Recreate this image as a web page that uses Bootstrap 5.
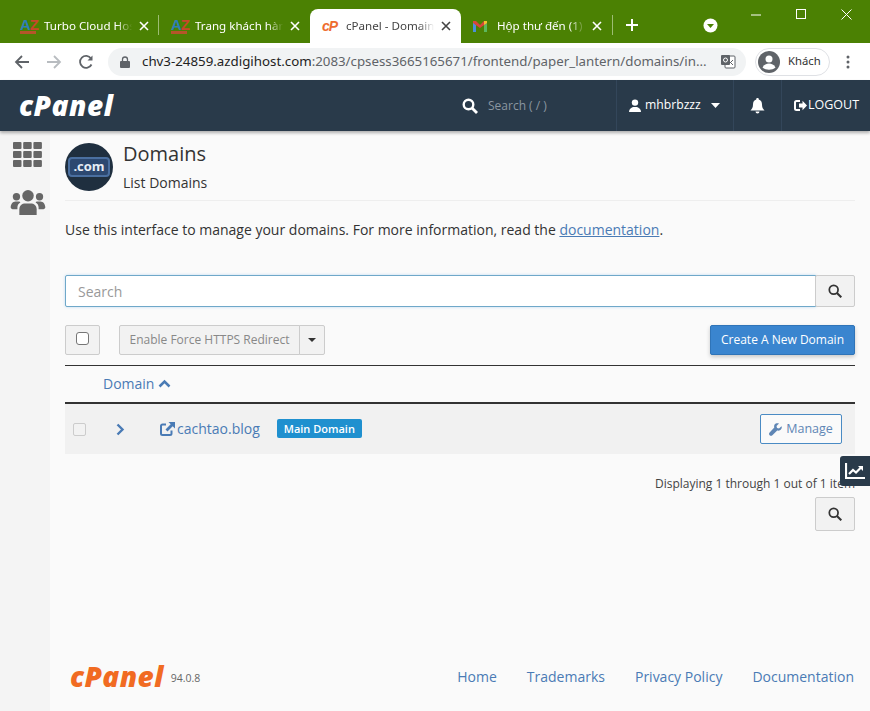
<!DOCTYPE html>
<html lang="en">
<head>
<meta charset="UTF-8">
<meta name="viewport" content="width=device-width, initial-scale=1.0">
<title>cPanel - Domains</title>
<link href="https://cdn.jsdelivr.net/npm/bootstrap@5.3.3/dist/css/bootstrap.min.css" rel="stylesheet">
<script src="https://cdn.jsdelivr.net/npm/bootstrap@5.3.3/dist/js/bootstrap.bundle.min.js"></script>
<style>
    html, body { height: 100%; }
    body { font-family: "Open Sans", "Liberation Sans", sans-serif; font-size: 14px; color: #333; background: #fafafa; overflow: hidden; }
    .page-wrap { height: 711px; position: relative; overflow: hidden; }
    svg { flex: none; }

    /* browser frame */
    .tab-strip { height: 43px; background: #4b8103; padding-left: 8px; position: relative; font-family: "Noto Sans", "Open Sans", sans-serif; }
    .brow-tab { width: 151px; height: 34px; padding: 0 8px 0 12px; color: #fff; font-size: 11.6px; }
    .brow-tab.is-active { background: #fff; color: #444; border-radius: 8px 8px 0 0; }
    .tab-title { width: 95px; margin-left: 8px; white-space: nowrap; overflow: hidden; -webkit-mask-image: linear-gradient(90deg, #000 76%, transparent 93%); mask-image: linear-gradient(90deg, #000 76%, transparent 93%); }
    .gmail-title { margin-left: 10px; }
    .tab-x { width: 10px; height: 10px; }
    .tab-sep { width: 1px; height: 20px; background: #9dbd73; flex: none; margin-bottom: 8px; }
    .sep-first { margin-left: -1px; }
    .az-fav { width: 16px; height: 16px; flex: none; font: 700 15px/13px "Liberation Sans", sans-serif; letter-spacing: -1px; color: #2d7fb8; border-bottom: 3px solid #b5552a; }
    .az-fav b { color: #c8472b; }
    .cp-fav { width: 16px; flex: none; font: italic 900 14px/16px "Liberation Sans", sans-serif; color: #ee6c2f; letter-spacing: -1px; }
    .plus-btn { position: absolute; left: 625px; top: 18px; }
    .drop-circle { position: absolute; left: 703px; top: 18px; }
    .win-ctl { position: absolute; top: 9px; }
    .win-min { left: 750px; top: 10px; }
    .win-max { left: 796px; }
    .win-close { left: 841px; }

    .tool-bar { height: 37px; background: #fff; padding-left: 14px; font-family: "Noto Sans", "Open Sans", sans-serif; }
    .tool-ico { width: 16px; height: 16px; margin-right: 16px; }
    .omni-box { width: 638px; height: 28px; margin-left: -2px; background: #f1f3f4; border-radius: 14px; padding: 0 10px 0 12px; font-size: 13.3px; color: #5f6368; white-space: nowrap; }
    .omni-box b { font-weight: 400; color: #222; }
    .profile-chip { width: 75px; height: 28px; margin-left: 9px; border: 1px solid #dfe1e5; border-radius: 14px; padding-left: 2px; font-size: 11.3px; color: #333; }

    /* cpanel top bar */
    .top-nav { height: 51px; background: #293a4a; color: #fff; box-shadow: 0 2px 3px rgba(0,0,0,.3); position: relative; z-index: 2; }
    .logo-white { width: 461px; padding-left: 19px; font: italic 800 28px/51px "Open Sans", sans-serif; letter-spacing: .5px; }
    .nav-search { width: 155px; color: #8b96a0; font-size: 12px; padding-left: 1px; gap: 10px; }
    .nav-cell { height: 51px; border-left: 1px solid #33465a; }
    .cell-user { width: 117px; padding-left: 12px; font-size: 12.2px; }
    .user-caret { margin-left: auto; margin-right: 13px; }
    .cell-bell { width: 48px; }
    .cell-out { padding-left: 12px; font-size: 12.5px; flex: 1; }
    .out-label { margin-left: 1px; }

    /* page body */
    .body-row { height: 580px; }
    .side-rail { width: 50px; flex: none; background: #f4f4f4; box-shadow: 1px 0 4px rgba(0,0,0,.25); padding: 11px 0 0 5px; gap: 23px; }
    .main-pane { flex: 1; padding: 12px 15px 0; background: #fafafa; min-width: 0; }
    .dom-badge { width: 48px; height: 48px; flex: none; border-radius: 50%; background: #1f2f3f; }
    .dom-badge span { width: 42px; height: 20px; background: #2c4870; border: 2px solid #4a6fa0; border-radius: 4px; color: #e6edf5; font: 700 13px/15px "Open Sans", sans-serif; text-align: center; }
    .page-head { height: 58px; border-bottom: 1px solid #eee; }
    .head-text { margin: -1px 0 0 10px; }
    .page-title { font-size: 20px; line-height: 24px; color: #333; font-weight: 400; }
    .page-sub { font-size: 14px; line-height: 20px; margin-top: 7px; }
    .intro-text { margin-top: 18px; line-height: 22px; color: #333; }
    .intro-text a, .dom-link { color: #4a7bb5; }
    .search-wrap { margin-top: 34px; height: 32px; }
    .search-wrap .form-control { height: 32px; border-radius: 2px 0 0 2px; border-color: #6fa8c9; box-shadow: 0 0 3px rgba(102,175,233,.4); font-size: 14px; padding: 0 12px; color: #888; }
    .search-wrap .form-control::placeholder { color: #999; }
    .grey-btn { background: #f2f2f2; border: 1px solid #ccc; border-radius: 2px; color: #333; }
    .search-btn { width: 40px; height: 32px; padding: 0; margin-left: -1px; }
    .action-row { margin-top: 18px; height: 30px; }
    .check-btn { width: 35px; height: 30px; padding: 0; margin-right: 19px; }
    .fake-check { width: 13px; height: 13px; border: 1px solid #767676; border-radius: 3px; background: #fff; display: block; margin-bottom: 4px; }
    .force-btn { height: 30px; width: 181px; padding: 0; font-size: 12px; color: #888; background: #f2f2f2; border: 1px solid #ccc; border-radius: 2px 0 0 2px; }
    .caret-btn { height: 30px; width: 26px; padding: 0; margin-left: -1px; border-radius: 0 2px 2px 0; }
    .create-btn { height: 30px; width: 145px; padding: 0; background: #3a85cf; border: 1px solid #2f74b8; color: #fff; font-size: 12px; border-radius: 2px; box-shadow: 0 2px 4px rgba(0,0,0,.2); }
    .col-head { margin-top: 10px; height: 34px; border-top: 1px solid #333; border-bottom: 2px solid #333; padding: 0 0 2px 38px; color: #4a7bb5; box-sizing: content-box; }
    .dom-row { height: 50px; background: #f1f1f1; padding: 0 13px 0 8px; }
    .row-check { width: 13px; height: 13px; border: 1px solid #ccc; border-radius: 2px; background: #f2f2f2; flex: none; margin-right: 30px; }
    .ext-ico { margin: 0 2px 0 35px; }
    .dom-link { margin-bottom: 2px; }
    .main-tag { background: #1f90cf; font-size: 11px; font-weight: 600; padding: 3px 7px; border-radius: 2px; line-height: 13px; margin: 0 0 2px 17px; }
    .manage-btn { width: 82px; height: 30px; padding: 0; border: 1px solid #4a8bc4; border-radius: 2px; background: #fafafa; color: #5f86b5; font-size: 12.5px; }
    .paging-note { margin-top: 21px; height: 18px; font-size: 12px; line-height: 18px; color: #444; text-align: right; }
    .foot-search { width: 40px; height: 34px; padding: 0; margin-top: 4px; }
    .foot-row { position: absolute; left: 50px; right: 16px; bottom: 19px; height: 32px; padding-left: 20px; }
    .logo-orange { font: italic 800 28px/32px "Open Sans", sans-serif; color: #f16b22; letter-spacing: .4px; }
    .ver-text { font-size: 10.5px; color: #666; margin-left: 7px; margin-top: 6px; }
    .foot-links { gap: 30px; font-size: 14px; }
    .foot-links a { color: #4a7bb5; text-decoration: none; }
    .stats-tab { position: absolute; left: 840px; top: 456px; width: 30px; height: 30px; background: #293a4a; border-radius: 3px 0 0 3px; }
</style>
</head>
<body>
<div class="page-wrap">

    <div class="tab-strip d-flex align-items-end">
        <div class="brow-tab d-flex align-items-center">
            <div class="az-fav">A<b>Z</b></div>
            <div class="tab-title">Turbo Cloud Hos</div>
            <svg class="tab-x" viewBox="0 0 10 10"><path d="M1 1l8 8M9 1l-8 8" stroke="#fff" stroke-width="1.6"/></svg>
        </div>
        <div class="tab-sep sep-first"></div>
        <div class="brow-tab d-flex align-items-center">
            <div class="az-fav">A<b>Z</b></div>
            <div class="tab-title">Trang khách hàn</div>
            <svg class="tab-x" viewBox="0 0 10 10"><path d="M1 1l8 8M9 1l-8 8" stroke="#fff" stroke-width="1.6"/></svg>
        </div>
        <div class="brow-tab is-active d-flex align-items-center">
            <div class="cp-fav">cP</div>
            <div class="tab-title">cPanel - Domain</div>
            <svg class="tab-x" viewBox="0 0 10 10"><path d="M1 1l8 8M9 1l-8 8" stroke="#444" stroke-width="1.6"/></svg>
        </div>
        <div class="brow-tab d-flex align-items-center">
            <svg width="14" height="12" viewBox="0 0 14 12"><path d="M0 2v10h3V5z" fill="#4a90d9"/><path d="M14 2v10h-3V5z" fill="#5cb85c"/><path d="M0 1l3 0 4 4 4-4 3 0 0 2-7 5-7-5z" fill="#d9453a"/><path d="M11 1h3v2l-3 2z" fill="#f2c230"/></svg>
            <div class="tab-title gmail-title">Hộp thư đến (1)</div>
            <svg class="tab-x" viewBox="0 0 10 10"><path d="M1 1l8 8M9 1l-8 8" stroke="#fff" stroke-width="1.6"/></svg>
        </div>
        <div class="tab-sep"></div>
        <svg class="plus-btn" width="14" height="14" viewBox="0 0 14 14"><path d="M7 1v12M1 7h12" stroke="#fff" stroke-width="2"/></svg>
        <svg class="drop-circle" width="15" height="15" viewBox="0 0 15 15"><circle cx="7.5" cy="7.5" r="7" fill="#fff"/><path d="M4 6h7l-3.5 4z" fill="#4b8103"/></svg>
        <svg class="win-ctl win-min" width="12" height="10" viewBox="0 0 12 10"><path d="M1 5h10" stroke="#fff"/></svg>
        <svg class="win-ctl win-max" width="11" height="11" viewBox="0 0 11 11"><rect x=".5" y=".5" width="9" height="9" fill="none" stroke="#fff"/></svg>
        <svg class="win-ctl win-close" width="11" height="11" viewBox="0 0 11 11"><path d="M.5.5l10 10M10.5.5l-10 10" stroke="#fff"/></svg>
    </div>

    <div class="tool-bar d-flex align-items-center">
        <svg class="tool-ico" viewBox="0 0 16 16"><path d="M15 8H2M8 2L2 8l6 6" fill="none" stroke="#5f6368" stroke-width="1.8"/></svg>
        <svg class="tool-ico" viewBox="0 0 16 16"><path d="M1 8h13M8 2l6 6-6 6" fill="none" stroke="#b8bcc0" stroke-width="1.8"/></svg>
        <svg class="tool-ico" viewBox="0 0 16 16"><path d="M13.5 10.5A6 6 0 1 1 13 4.5" fill="none" stroke="#5f6368" stroke-width="1.8"/><path d="M14.5 1.5v5h-5z" fill="#5f6368"/></svg>
        <div class="omni-box d-flex align-items-center">
            <svg width="10" height="12" viewBox="0 0 10 12" class="me-2"><rect y="5" width="10" height="7" rx="1" fill="#5f6368"/><path d="M2.5 5V3.5a2.5 2.500 0 0 1 5 0V5" fill="none" stroke="#5f6368" stroke-width="1.3"/></svg>
            <span class="ms-1"><b>chv3-24859.azdigihost.com</b>:2083/cpsess3665165671/frontend/paper_lantern/domains/in...</span>
            <svg class="ms-auto" width="16" height="15" viewBox="0 0 16 15"><rect x="5" y="2" width="10" height="12" rx="1" fill="#fff" stroke="#5f6368"/><rect x="1" y="1" width="9" height="10" rx="1" fill="#5f6368"/><path d="M8 6l5 5M13 6l-5 5" stroke="#5f6368"/><circle cx="5.5" cy="6" r="2" fill="none" stroke="#fff"/></svg>
        </div>
        <div class="profile-chip d-flex align-items-center">
            <svg width="22" height="22" viewBox="0 0 22 22" class="me-2"><circle cx="11" cy="11" r="11" fill="#5f6368"/><circle cx="11" cy="8" r="3.5" fill="#fff"/><path d="M4.5 16.500c1.500-3 4-4 6.500-4s5 1 6.500 4c-3.500 3-9.500 3-13 0z" fill="#fff"/></svg>
            Khách
        </div>
        <svg class="ms-3" width="4" height="14" viewBox="0 0 4 14"><circle cx="2" cy="2" r="1.5" fill="#5f6368"/><circle cx="2" cy="7" r="1.5" fill="#5f6368"/><circle cx="2" cy="12" r="1.5" fill="#5f6368"/></svg>
    </div>

    <nav class="top-nav d-flex align-items-center">
        <div class="logo-white">cPanel</div>
        <div class="nav-search d-flex align-items-center">
            <svg width="16" height="16" viewBox="0 0 16 16"><circle cx="6.500" cy="6.500" r="4.800" fill="none" stroke="#fff" stroke-width="2.400"/><path d="M10 10l5 5" stroke="#fff" stroke-width="2.800"/></svg>
            <span>Search ( / )</span>
        </div>
        <div class="nav-cell cell-user d-flex align-items-center">
            <svg width="12" height="13" viewBox="0 0 12 13"><circle cx="6" cy="3.600" r="3.200" fill="#fff"/><path d="M0 13c0-3 2-4 4-5h4c2 1 4 2 4 5z" fill="#fff"/></svg>
            <span class="ms-1">mhbrbzzz</span>
            <svg class="user-caret" width="9" height="5" viewBox="0 0 9 5"><path d="M0 0h9L4.500 5z" fill="#fff"/></svg>
        </div>
        <div class="nav-cell cell-bell d-flex align-items-center justify-content-center">
            <svg width="15" height="16" viewBox="0 0 15 16"><path d="M7.500 0a1.200 1.200 0 0 1 1.200 1.500C11 2 12 4 12 6.500c0 3 1 4.500 2.500 6H.5C2 11 3 9.500 3 6.500 3 4 4 2 6.300 1.500A1.200 1.200 0 0 1 7.500 0z" fill="#fff"/><path d="M5.500 13.500h4a2 2 0 0 1-4 0z" fill="#fff"/></svg>
        </div>
        <div class="nav-cell cell-out d-flex align-items-center">
            <svg width="13" height="11" viewBox="0 0 13 11"><path d="M6 1H2.500A1.500 1.500 0 0 0 1 2.500v6A1.500 1.500 0 0 0 2.500 10H6" fill="none" stroke="#fff" stroke-width="2"/><path d="M5 3.500h3.500V.8L13 5.500l-4.500 4.700V7.500H5z" fill="#fff"/></svg>
            <span class="out-label">LOGOUT</span>
        </div>
    </nav>

    <div class="body-row d-flex">
        <aside class="side-rail d-flex flex-column align-items-center">
            <svg width="29" height="25" viewBox="0 0 29 25"><g fill="#666"><rect width="8.500" height="7" rx="1"/><rect x="10.200" width="8.500" height="7" rx="1"/><rect x="20.400" width="8.500" height="7" rx="1"/><rect y="9" width="8.500" height="7" rx="1"/><rect x="10.200" y="9" width="8.500" height="7" rx="1"/><rect x="20.400" y="9" width="8.500" height="7" rx="1"/><rect y="18" width="8.500" height="7" rx="1"/><rect x="10.200" y="18" width="8.500" height="7" rx="1"/><rect x="20.400" y="18" width="8.500" height="7" rx="1"/></g></svg>
            <svg width="36" height="25" viewBox="0 0 36 26"><g fill="#666"><circle cx="18" cy="6" r="6"/><circle cx="6" cy="7" r="3.800"/><circle cx="30" cy="7" r="3.800"/><path d="M9 26v-6c0-4 3-6 6-6h6c3 0 6 2 6 6v6z"/><path d="M0 18c0-3 2-6 5-6h3c1 0 2 .5 2 1-2 1-3 3-3 5v2H2c-1 0-2-1-2-2z"/><path d="M36 18c0-3-2-6-5-6h-3c-1 0-2 .5-2 1 2 1 3 3 3 5v2h5c1 0 2-1 2-2z"/></g></svg>
        </aside>

        <main class="main-pane">
            <div class="page-head d-flex">
                <div class="dom-badge d-flex align-items-center justify-content-center"><span>.com</span></div>
                <div class="head-text">
                    <h1 class="page-title m-0">Domains</h1>
                    <div class="page-sub">List Domains</div>
                </div>
            </div>

            <p class="intro-text mb-0">Use this interface to manage your domains. For more information, read the <a href="#">documentation</a>.</p>

            <div class="search-wrap d-flex">
                <input type="text" class="form-control" placeholder="Search">
                <button class="grey-btn search-btn d-flex align-items-center justify-content-center flex-shrink-0">
                    <svg width="14" height="14" viewBox="0 0 16 16"><circle cx="6.500" cy="6.500" r="5" fill="none" stroke="#333" stroke-width="2"/><path d="M10.200 10.200l5 5" stroke="#333" stroke-width="2.400"/></svg>
                </button>
            </div>

            <div class="action-row d-flex">
                <button class="grey-btn check-btn d-flex align-items-center justify-content-center"><span class="fake-check"></span></button>
                <div class="d-flex">
                    <button class="force-btn">Enable Force HTTPS Redirect</button>
                    <button class="grey-btn caret-btn d-flex align-items-center justify-content-center">
                        <svg width="8" height="4" viewBox="0 0 8 4"><path d="M0 0h8L4 4z" fill="#333"/></svg>
                    </button>
                </div>
                <button class="create-btn ms-auto">Create A New Domain</button>
            </div>

            <div class="col-head d-flex align-items-center">
                Domain
                <svg class="ms-1" width="13" height="9" viewBox="0 0 13 9"><path d="M1.500 7.500l5-5 5 5" fill="none" stroke="#4a7bb5" stroke-width="2.500"/></svg>
            </div>

            <div class="dom-row d-flex align-items-center">
                <span class="row-check"></span>
                <svg width="9" height="13" viewBox="0 0 9 13"><path d="M1.500 1.500l5 5-5 5" fill="none" stroke="#4a7bb5" stroke-width="2.400"/></svg>
                <svg class="ext-ico" width="15" height="14" viewBox="0 0 15 14"><path d="M11.500 8.500V11.500a1.500 1.500 0 0 1-1.500 1.500H2.500A1.500 1.500 0 0 1 1 11.500V4A1.500 1.500 0 0 1 2.500 2.500H6" fill="none" stroke="#4a7bb5" stroke-width="2"/><path d="M8.500 0H15V6.500L12.700 4.300 7.500 9.500 5.500 7.500 10.700 2.300z" fill="#4a7bb5"/></svg>
                <a href="#" class="dom-link text-decoration-none">cachtao.blog</a>
                <span class="badge main-tag">Main Domain</span>
                <button class="manage-btn ms-auto d-flex align-items-center justify-content-center">
                    <svg class="me-1" width="13" height="13" viewBox="0 0 13 13"><path d="M12.500 3.200L10 5.500 8 5 7.500 3 10 .6C8.500-.3 6.500.2 5.600 1.500 5 2.500 5 3.600 5.300 4.600L.6 9.400c-.8.800-.8 2 0 2.800s2 .8 2.800 0l4.800-4.700c1 .3 2.100.2 3.100-.4 1.300-.9 1.900-2.800 1.200-3.900z" fill="#5f86b5"/></svg>
                    Manage
                </button>
            </div>

            <div class="paging-note">Displaying 1 through 1 out of 1 item</div>
            <div class="d-flex justify-content-end">
                <button class="grey-btn foot-search d-flex align-items-center justify-content-center">
                    <svg width="14" height="14" viewBox="0 0 16 16"><circle cx="6.500" cy="6.500" r="5" fill="none" stroke="#333" stroke-width="2"/><path d="M10.200 10.200l5 5" stroke="#333" stroke-width="2.400"/></svg>
                </button>
            </div>
        </main>
    </div>

    <footer class="foot-row d-flex align-items-center">
        <span class="logo-orange">cPanel</span>
        <span class="ver-text">94.0.8</span>
        <div class="foot-links d-flex ms-auto">
            <a href="#">Home</a><a href="#">Trademarks</a><a href="#">Privacy Policy</a><a href="#">Documentation</a>
        </div>
    </footer>

    <div class="stats-tab d-flex align-items-center justify-content-center">
        <svg width="21" height="18" viewBox="0 0 21 18"><path d="M1 1v15h19" fill="none" stroke="#fff" stroke-width="2.200"/><path d="M4 12l4-4 3 2.500 5-5" fill="none" stroke="#fff" stroke-width="2.200"/><path d="M13 4h5v5z" fill="#fff"/></svg>
    </div>
</div>
</body>
</html>
